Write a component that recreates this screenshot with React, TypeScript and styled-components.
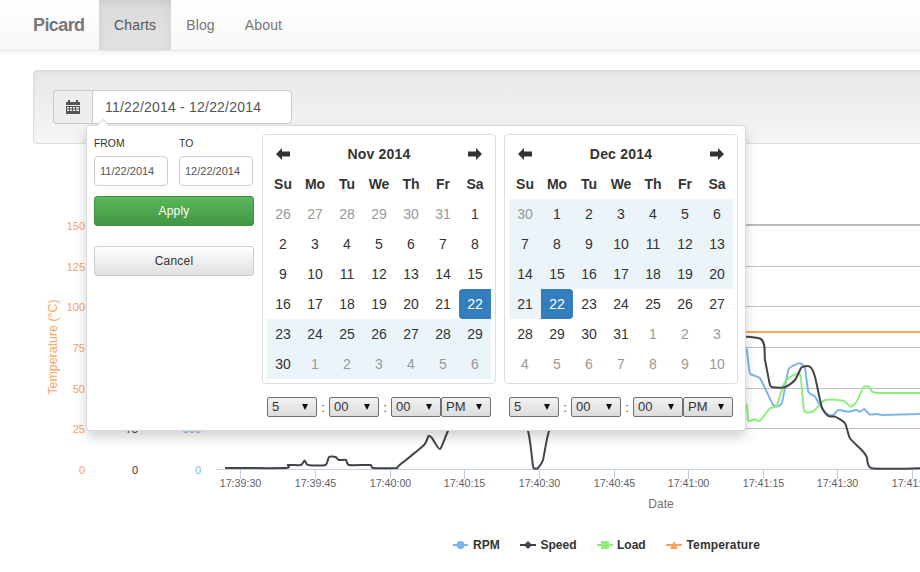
import React from 'react';
import styled, { createGlobalStyle } from 'styled-components';

const GlobalStyle = createGlobalStyle`
  html, body {
    margin: 0;
    padding: 0;
    overflow: hidden;
    background: #fff;
    font-family: "Liberation Sans", Arial, sans-serif;
    color: #333;
  }
  * {
    box-sizing: border-box;
  }
`;

const Navbar = styled.nav`
  display: flex;
  height: 51px;
  padding-left: 33px;
  background: linear-gradient(to bottom, #fff, #f8f8f8);
  border-bottom: 1px solid #e7e7e7;
  box-shadow: 0 1px 5px rgb(0 0 0 / 0.075);
`;

const Brand = styled.a`
  width: 66px;
  font-size: 18px;
  font-weight: 700;
  line-height: 50px;
  letter-spacing: -0.6px;
  color: #777;
`;

const NavItem = styled.a<{ $active?: boolean }>`
  padding: 0 15px;
  font-size: 14px;
  line-height: 50px;
  letter-spacing: 0.15px;
  color: ${(p) => (p.$active ? '#555' : '#777')};
  background: ${(p) =>
    p.$active ? 'linear-gradient(to bottom, #dbdbdb, #e2e2e2)' : 'none'};
  box-shadow: ${(p) =>
    p.$active ? 'inset 0 3px 9px rgb(0 0 0 / 0.075)' : 'none'};
`;

const Well = styled.section`
  width: 1000px;
  height: 74px;
  margin: 19px 0 0 33px;
  padding: 19px;
  background: linear-gradient(to bottom, #e8e8e8, #f5f5f5);
  border: 1px solid #dcdcdc;
  border-radius: 4px;
  box-shadow: inset 0 1px 3px rgb(0 0 0 / 0.05);
`;

const InputGroup = styled.div`
  position: relative;
  display: flex;
  width: 239px;
  height: 34px;
`;

const Addon = styled.span`
  display: flex;
  align-items: center;
  justify-content: center;
  width: 39px;
  background: #eee;
  border: 1px solid #ccc;
  border-right: 0;
  border-radius: 4px 0 0 4px;
`;

const RangeInput = styled.input`
  flex: 1;
  min-width: 0;
  padding: 0 12px;
  font: 14px "Liberation Sans", Arial, sans-serif;
  letter-spacing: 0.2px;
  color: #555;
  background: #fff;
  border: 1px solid #ccc;
  border-radius: 0 4px 4px 0;
  outline: none;
`;

const Popup = styled.div`
  position: absolute;
  top: 35px;
  left: 33px;
  z-index: 10;
  display: flex;
  gap: 8px;
  width: 660px;
  height: 306px;
  padding: 8px 7px 13px;
  background: #fff;
  border: 1px solid rgb(0 0 0 / 0.15);
  border-radius: 4px;
  box-shadow: 0 6px 12px rgb(0 0 0 / 0.175);

  &::before {
    content: '';
    position: absolute;
    top: -7px;
    left: 9px;
    border-right: 7px solid transparent;
    border-bottom: 7px solid #ccc;
    border-left: 7px solid transparent;
  }

  &::after {
    content: '';
    position: absolute;
    top: -6px;
    left: 10px;
    border-right: 6px solid transparent;
    border-bottom: 6px solid #fff;
    border-left: 6px solid transparent;
  }
`;

const Sidebar = styled.div`
  display: flex;
  flex-direction: column;
  width: 160px;
`;

const RangeFields = styled.div`
  display: grid;
  grid-template-columns: 74px 74px;
  column-gap: 11px;
`;

const FieldLabel = styled.label`
  display: block;
  margin-bottom: 2px;
  font-size: 10.4px;
  line-height: 20px;
  color: #333;
`;

const DateInput = styled.input`
  display: block;
  width: 74px;
  height: 30px;
  padding: 0 5px;
  font: 11px "Liberation Sans", Arial, sans-serif;
  color: #555;
  background: #fff;
  border: 1px solid #ccc;
  border-radius: 4px;
  outline: none;
`;

const ActionButton = styled.button<{ $primary?: boolean }>`
  width: 160px;
  height: 30px;
  margin-top: ${(p) => (p.$primary ? '10px' : '20px')};
  font: 12px "Liberation Sans", Arial, sans-serif;
  letter-spacing: 0.2px;
  color: ${(p) => (p.$primary ? '#fff' : '#333')};
  background: ${(p) =>
    p.$primary
      ? 'linear-gradient(to bottom, #5cb85c, #419641)'
      : 'linear-gradient(to bottom, #fff, #e0e0e0)'};
  border: 1px solid ${(p) => (p.$primary ? '#3e8f3e' : '#ccc')};
  border-radius: 3px;
`;

const CalendarColumn = styled.div`
  width: 234px;
`;

const Calendar = styled.div`
  display: grid;
  grid-template-columns: repeat(7, 32px);
  grid-auto-rows: 30px;
  height: 250px;
  padding: 4px;
  border: 1px solid #ddd;
  border-radius: 4px;
`;

const NavArrow = styled.span`
  display: flex;
  align-items: center;
  justify-content: center;
`;

const MonthTitle = styled.div`
  grid-column: span 5;
  font-size: 14px;
  font-weight: 700;
  line-height: 30px;
  letter-spacing: 0.2px;
  text-align: center;
`;

const Weekday = styled.div`
  font-size: 14px;
  font-weight: 700;
  line-height: 30px;
  text-align: center;
`;

const Day = styled.div<{ $off?: boolean; $range?: boolean; $end?: string }>`
  font-size: 14px;
  line-height: 30px;
  text-align: center;
  color: ${(p) => (p.$end ? '#fff' : p.$off ? '#999' : '#333')};
  background: ${(p) =>
    p.$end ? '#357ebd' : p.$range ? '#ebf4f8' : 'transparent'};
  border-radius: ${(p) => p.$end || '0'};
`;

const TimeRow = styled.div`
  display: flex;
  align-items: center;
  height: 20px;
  margin-top: 13px;
  padding-left: 5px;
`;

const TimeSelect = styled.div`
  position: relative;
  width: 50px;
  height: 20px;
  padding-left: 4px;
  font-size: 13px;
  line-height: 18px;
  color: #333;
  background: linear-gradient(to bottom, #f2f2f2, #dcdcdc);
  border: 1px solid #707070;
  border-radius: 2px;

  &::after {
    content: '';
    position: absolute;
    top: 6px;
    right: 8px;
    border-top: 6px solid #111;
    border-right: 3px solid transparent;
    border-left: 3px solid transparent;
  }
`;

const Colon = styled.span`
  width: 12px;
  font-size: 13px;
  text-align: center;
  color: #555;
`;

const ChartSvg = styled.svg`
  display: block;
  width: 920px;
  height: 428px;
  font-family: "Liberation Sans", Arial, sans-serif;
`;

const CalendarIcon = () => (
  <svg width="14" height="14" viewBox="0 0 14 14">
    <path d="M0 2h2V0h2v2h6V0h2v2h2v3H0z" fill="#555" />
    <path
      d="M0 6h14v8H0zM1 7v1.5h2V7zm3 0v1.5h2V7zm3 0v1.5h2V7zm3 0v1.5h3V7zM1 9.5V11h2V9.5zm3 0V11h2V9.5zm3 0V11h2V9.5zm3 0V11h3V9.5z"
      fill="#555"
    />
  </svg>
);

const ArrowIcon = ({ right }: { right?: boolean }) => (
  <svg width="14" height="12" viewBox="0 0 14 12">
    <path
      d={
        right
          ? 'M8 0l6 6-6 6V8.500H0v-5h8z'
          : 'M6 0L0 6l6 6V8.500h8v-5H6z'
      }
      fill="#333"
    />
  </svg>
);

type Cell = { d: number; off?: boolean; range?: boolean; end?: string };

const nums = (from: number, to: number) =>
  Array.from({ length: to - from + 1 }, (_, i) => from + i);

const WEEKDAYS = ['Su', 'Mo', 'Tu', 'We', 'Th', 'Fr', 'Sa'];

const NOV: Cell[] = [
  ...nums(26, 31).map((d) => ({ d, off: true })),
  ...nums(1, 21).map((d) => ({ d })),
  { d: 22, end: '4px 0 0 4px' },
  ...nums(23, 30).map((d) => ({ d, range: true })),
  ...nums(1, 6).map((d) => ({ d, off: true, range: true })),
];

const DEC: Cell[] = [
  { d: 30, off: true, range: true },
  ...nums(1, 21).map((d) => ({ d, range: true })),
  { d: 22, end: '0 4px 4px 0' },
  ...nums(23, 31).map((d) => ({ d })),
  ...nums(1, 10).map((d) => ({ d, off: true })),
];

const DateCalendar = ({ title, days }: { title: string; days: Cell[] }) => (
  <CalendarColumn>
    <Calendar>
      <NavArrow>
        <ArrowIcon />
      </NavArrow>
      <MonthTitle>{title}</MonthTitle>
      <NavArrow>
        <ArrowIcon right />
      </NavArrow>
      {WEEKDAYS.map((w) => (
        <Weekday key={w}>{w}</Weekday>
      ))}
      {days.map((c, i) => (
        <Day key={i} $off={c.off} $range={c.range} $end={c.end}>
          {c.d}
        </Day>
      ))}
    </Calendar>
    <TimeRow>
      <TimeSelect>5</TimeSelect>
      <Colon>:</Colon>
      <TimeSelect>00</TimeSelect>
      <Colon>:</Colon>
      <TimeSelect>00</TimeSelect>
      <TimeSelect>PM</TimeSelect>
    </TimeRow>
  </CalendarColumn>
);

type Pt = [number, number];

// catmull-rom through the points, with a low tension so the flat parts stay flat
const smooth = (pts: Pt[]) => {
  let d = `M${pts[0][0]} ${pts[0][1]}`;
  for (let i = 0; i < pts.length - 1; i++) {
    const p0 = pts[Math.max(i - 1, 0)];
    const p1 = pts[i];
    const p2 = pts[i + 1];
    const p3 = pts[Math.min(i + 2, pts.length - 1)];
    const c1x = p1[0] + (p2[0] - p0[0]) / 10;
    const c1y = p1[1] + (p2[1] - p0[1]) / 10;
    const c2x = p2[0] - (p3[0] - p1[0]) / 10;
    const c2y = p2[1] - (p3[1] - p1[1]) / 10;
    d += `C${c1x} ${c1y} ${c2x} ${c2y} ${p2[0]} ${p2[1]}`;
  }
  return d;
};

const SPEED: Pt[] = [
  [225, 468], [286, 468], [288, 465], [301, 465], [304.600, 460.500], [308, 465],
  [325.500, 465], [329, 457], [335.500, 457], [339, 460], [346, 460], [349, 465],
  [370.500, 465], [373, 468], [396.500, 468], [398, 466.500], [424, 445], [428.500, 436],
  [432, 438], [440, 449], [448, 431], [470, 390], [510, 390], [528, 431], [533, 466],
  [535, 468.500], [538, 468], [543, 460], [549, 431], [570, 380], [700, 338.500],
  [760, 338.500], [765, 360], [770, 385], [773, 387.300], [785, 387.300], [795, 380],
  [801.700, 367.300], [810, 366.700], [815, 376.700], [821.700, 406.700], [828.300, 416],
  [835, 416.700], [845, 423.300], [850, 438.300], [861.700, 450], [866.700, 456.700],
  [871.700, 468.300], [920, 468.300],
];

const RPM: Pt[] = [
  [740, 340], [746.700, 350], [750, 373.300], [760, 378.300], [773.300, 405],
  [781.700, 403.300], [788.300, 370], [793.300, 365.700], [800, 363.300], [805, 368.300],
  [808.300, 391.700], [815, 396.700], [825, 413.300], [833.300, 415], [838.300, 410],
  [848.300, 411.700], [856, 410], [860, 411.700], [864.300, 409], [869.300, 414.300],
  [876.700, 414], [883, 415], [920, 414],
];

const LOAD: Pt[] = [
  [740, 400], [746.700, 405], [748.300, 420.700], [755, 419.300], [760, 420.700],
  [770, 408.300], [776.700, 406], [783.300, 385], [788.300, 378.300], [800, 374.300],
  [804, 410], [810, 412.300], [815, 410], [825, 400], [843.300, 400.700], [850.700, 406.700],
  [856.700, 401.700], [863.300, 387.300], [869.300, 386.700], [875, 392.700], [920, 393],
];

const GRID_Y = [266.500, 306.500, 347.500, 388.500, 428.500];
const TICKS = [
  ['17:39:30', 240.500], ['17:39:45', 315.500], ['17:40:00', 390.500], ['17:40:15', 464.500],
  ['17:40:30', 539.500], ['17:40:45', 614.500], ['17:41:00', 688.500], ['17:41:15', 763.500],
  ['17:41:30', 837.500], ['17:41:45', 912.500],
] as const;
const TEMP_TICKS = [
  ['150', 230], ['125', 271], ['100', 311], ['75', 352], ['50', 393], ['25', 433], ['0', 474],
] as const;

const Chart = () => (
  <ChartSvg viewBox="0 144 920 428">
    <line x1="216" x2="920" y1="225" y2="225" stroke="#bbb" strokeWidth="2" />
    {GRID_Y.map((y) => (
      <line key={y} x1="216" x2="920" y1={y} y2={y} stroke="#c0c0c0" />
    ))}
    <line x1="216" x2="920" y1="469.500" y2="469.500" stroke="#c0d0e0" />
    {TICKS.map(([label, x]) => (
      <g key={label}>
        <line x1={x} x2={x} y1="469" y2="479" stroke="#c0d0e0" />
        <text x={x} y="487" fontSize="10.700" fill="#606060" textAnchor="middle">
          {label}
        </text>
      </g>
    ))}
    {TEMP_TICKS.map(([label, y]) => (
      <text key={label} x="85" y={y} fontSize="11" fill="#f7a35c" textAnchor="end">
        {label}
      </text>
    ))}
    <text
      transform="translate(57 347) rotate(-90)"
      fontSize="12.400"
      fill="#f7a35c"
      textAnchor="middle"
    >
      Temperature (°C)
    </text>
    <text x="138" y="433" fontSize="11" fill="#333" textAnchor="end">75</text>
    <text x="138" y="474" fontSize="11" fill="#333" textAnchor="end">0</text>
    <text x="201" y="433" fontSize="11" fill="#7cb5ec" textAnchor="end">500</text>
    <text x="201" y="474" fontSize="11" fill="#7cb5ec" textAnchor="end">0</text>
    <text x="661" y="508" fontSize="12" fill="#707070" textAnchor="middle">Date</text>

    <path d={smooth(RPM)} fill="none" stroke="#7cb5ec" strokeWidth="2" />
    <path d={smooth(LOAD)} fill="none" stroke="#90ed7d" strokeWidth="2" />
    <line x1="225" x2="920" y1="332" y2="332" stroke="#f7a35c" strokeWidth="2" />
    <path d={smooth(SPEED)} fill="none" stroke="#434348" strokeWidth="2" />

    <g fontSize="12" fontWeight="700" fill="#333">
      <line x1="453" x2="468" y1="545" y2="545" stroke="#7cb5ec" strokeWidth="2" />
      <circle cx="460.500" cy="545" r="4" fill="#7cb5ec" />
      <text x="473" y="549">RPM</text>
      <line x1="520" x2="536" y1="545" y2="545" stroke="#434348" strokeWidth="2" />
      <path d="M528 541l4 4-4 4-4-4z" fill="#434348" />
      <text x="540.500" y="549">Speed</text>
      <line x1="597" x2="613" y1="545" y2="545" stroke="#90ed7d" strokeWidth="2" />
      <rect x="601" y="541" width="8" height="8" fill="#90ed7d" />
      <text x="617" y="549">Load</text>
      <line x1="666" x2="682" y1="545" y2="545" stroke="#f7a35c" strokeWidth="2" />
      <path d="M674 541l4 8h-8z" fill="#f7a35c" />
      <text x="686.500" y="549" letterSpacing="0.15">Temperature</text>
    </g>
  </ChartSvg>
);

export default function App() {
  return (
    <>
      <GlobalStyle />
      <Navbar>
        <Brand>Picard</Brand>
        <NavItem $active>Charts</NavItem>
        <NavItem>Blog</NavItem>
        <NavItem>About</NavItem>
      </Navbar>
      <Well>
        <InputGroup>
          <Addon>
            <CalendarIcon />
          </Addon>
          <RangeInput readOnly value="11/22/2014 - 12/22/2014" />
          <Popup>
            <Sidebar>
              <RangeFields>
                <div>
                  <FieldLabel>FROM</FieldLabel>
                  <DateInput readOnly value="11/22/2014" />
                </div>
                <div>
                  <FieldLabel>TO</FieldLabel>
                  <DateInput readOnly value="12/22/2014" />
                </div>
              </RangeFields>
              <ActionButton $primary>Apply</ActionButton>
              <ActionButton>Cancel</ActionButton>
            </Sidebar>
            <DateCalendar title="Nov 2014" days={NOV} />
            <DateCalendar title="Dec 2014" days={DEC} />
          </Popup>
        </InputGroup>
      </Well>
      <Chart />
    </>
  );
}
